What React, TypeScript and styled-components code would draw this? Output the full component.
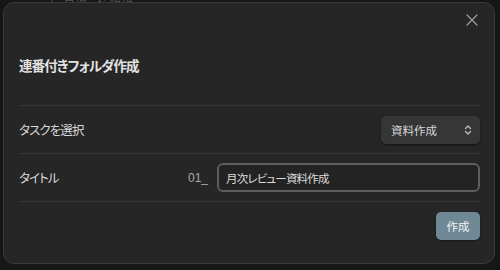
import React, { useState } from "react";
import styled, { createGlobalStyle } from "styled-components";

const GlobalStyle = createGlobalStyle`
  html, body {
    margin: 0;
    padding: 0;
    background: #161616;
    width: 500px;
    height: 270px;
    overflow: hidden;
  }
  body {
    font-family: "Noto Sans CJK JP", "Noto Sans", "Liberation Sans", sans-serif;
    font-feature-settings: "palt" 1;
    color: #dadada;
  }
  input, button {
    font-feature-settings: "palt" 1;
  }
`;

const Page = styled.div`
  width: 500px;
  height: 270px;
  display: flex;
  flex-direction: column;
  overflow: hidden;
`;

const Behind = styled.div`
  height: 2px;
  overflow: hidden;
  display: flex;
  gap: 10px;
  padding-left: 50px;
  font-size: 12px;
  line-height: 12px;
  color: #555555;

  span {
    display: block;
    margin-top: -9px;
  }
`;

const Modal = styled.div`
  margin: 0 5px 0 3px;
  height: 262px;
  box-sizing: border-box;
  background: #262626;
  border: 1px solid #3a3a3a;
  border-radius: 11px;
  padding: 0 14px 0 15px;
  display: flex;
  flex-direction: column;
`;

const TopBar = styled.div`
  height: 26px;
  display: flex;
  justify-content: flex-end;
  align-items: flex-end;
`;

const CloseButton = styled.button`
  width: 18px;
  height: 18px;
  margin-right: -1px;
  padding: 0;
  border: none;
  background: none;
  color: #9a9a9a;
  display: flex;
  align-items: center;
  justify-content: center;
`;

const Title = styled.h2`
  margin: 25px 0 0;
  height: 22px;
  font-size: 13.5px;
  line-height: 22px;
  font-weight: 700;
  letter-spacing: -0.9px;
  color: #e2e2e2;
`;

const Settings = styled.div`
  margin-top: 29px;
  display: flex;
  flex-direction: column;
`;

const Row = styled.div`
  border-top: 1px solid #353535;
  height: 47px;
  display: flex;
  align-items: center;
  justify-content: space-between;
`;

const Label = styled.div`
  font-size: 12.5px;
  letter-spacing: -0.9px;
  color: #d8d8d8;
`;

const Control = styled.div`
  display: flex;
  align-items: center;
  gap: 9px;
`;

const Select = styled.div`
  width: 99px;
  height: 28px;
  box-sizing: border-box;
  border-radius: 5px;
  background: #363636;
  box-shadow: 0 1px 2px rgba(0, 0, 0, 0.5);
  padding: 0 8px 0 10px;
  display: flex;
  align-items: center;
  justify-content: space-between;
  font-size: 11.5px;
  color: #d6d6d6;
`;

const Prefix = styled.span`
  font-family: "Liberation Sans", sans-serif;
  font-size: 12px;
  color: #a8a8a8;
`;

const Input = styled.input`
  width: 263px;
  height: 29px;
  box-sizing: border-box;
  border: 2px solid #5e5e5e;
  border-radius: 6px;
  background: #232323;
  padding: 0 7px;
  font-family: "Noto Sans CJK JP", sans-serif;
  font-size: 11.5px;
  letter-spacing: -0.8px;
  color: #dcdcdc;
  outline: none;
`;

const Footer = styled.div`
  border-top: 1px solid #353535;
  padding-top: 10px;
  display: flex;
  justify-content: flex-end;
`;

const PrimaryButton = styled.button`
  width: 44px;
  height: 28px;
  border: none;
  border-radius: 5px;
  background: #6f8896;
  color: #eef2f4;
  font-family: "Noto Sans CJK JP", sans-serif;
  font-size: 11.5px;
  padding: 0;
  box-shadow: 0 1px 2px rgba(0, 0, 0, 0.4);
`;

const App = () => {
  const [title, setTitle] = useState("月次レビュー資料作成");

  return (
    <Page>
      <GlobalStyle />
      <Behind>
        <span>|</span>
        <span>習慣</span>
        <span>連絡帳</span>
      </Behind>
      <Modal>
        <TopBar>
          <CloseButton aria-label="close">
            <svg width="12" height="12" viewBox="0 0 12 12" fill="none" stroke="currentColor" strokeWidth="1.3" strokeLinecap="round">
              <path d="M1 1 L11 11 M11 1 L1 11" />
            </svg>
          </CloseButton>
        </TopBar>
        <Title>連番付きフォルダ作成</Title>
        <Settings>
          <Row>
            <Label>タスクを選択</Label>
            <Select>
              <span>資料作成</span>
              <svg width="8" height="12" viewBox="0 0 8 12" fill="none" stroke="#bdbdbd" strokeWidth="1.3" strokeLinecap="round" strokeLinejoin="round">
                <path d="M1.5 4.5 L4 2 L6.5 4.5 M1.5 7.5 L4 10 L6.5 7.5" />
              </svg>
            </Select>
          </Row>
          <Row>
            <Label>タイトル</Label>
            <Control>
              <Prefix>01_</Prefix>
              <Input value={title} onChange={(e) => setTitle(e.target.value)} />
            </Control>
          </Row>
        </Settings>
        <Footer>
          <PrimaryButton>作成</PrimaryButton>
        </Footer>
      </Modal>
    </Page>
  );
};

export default App;
